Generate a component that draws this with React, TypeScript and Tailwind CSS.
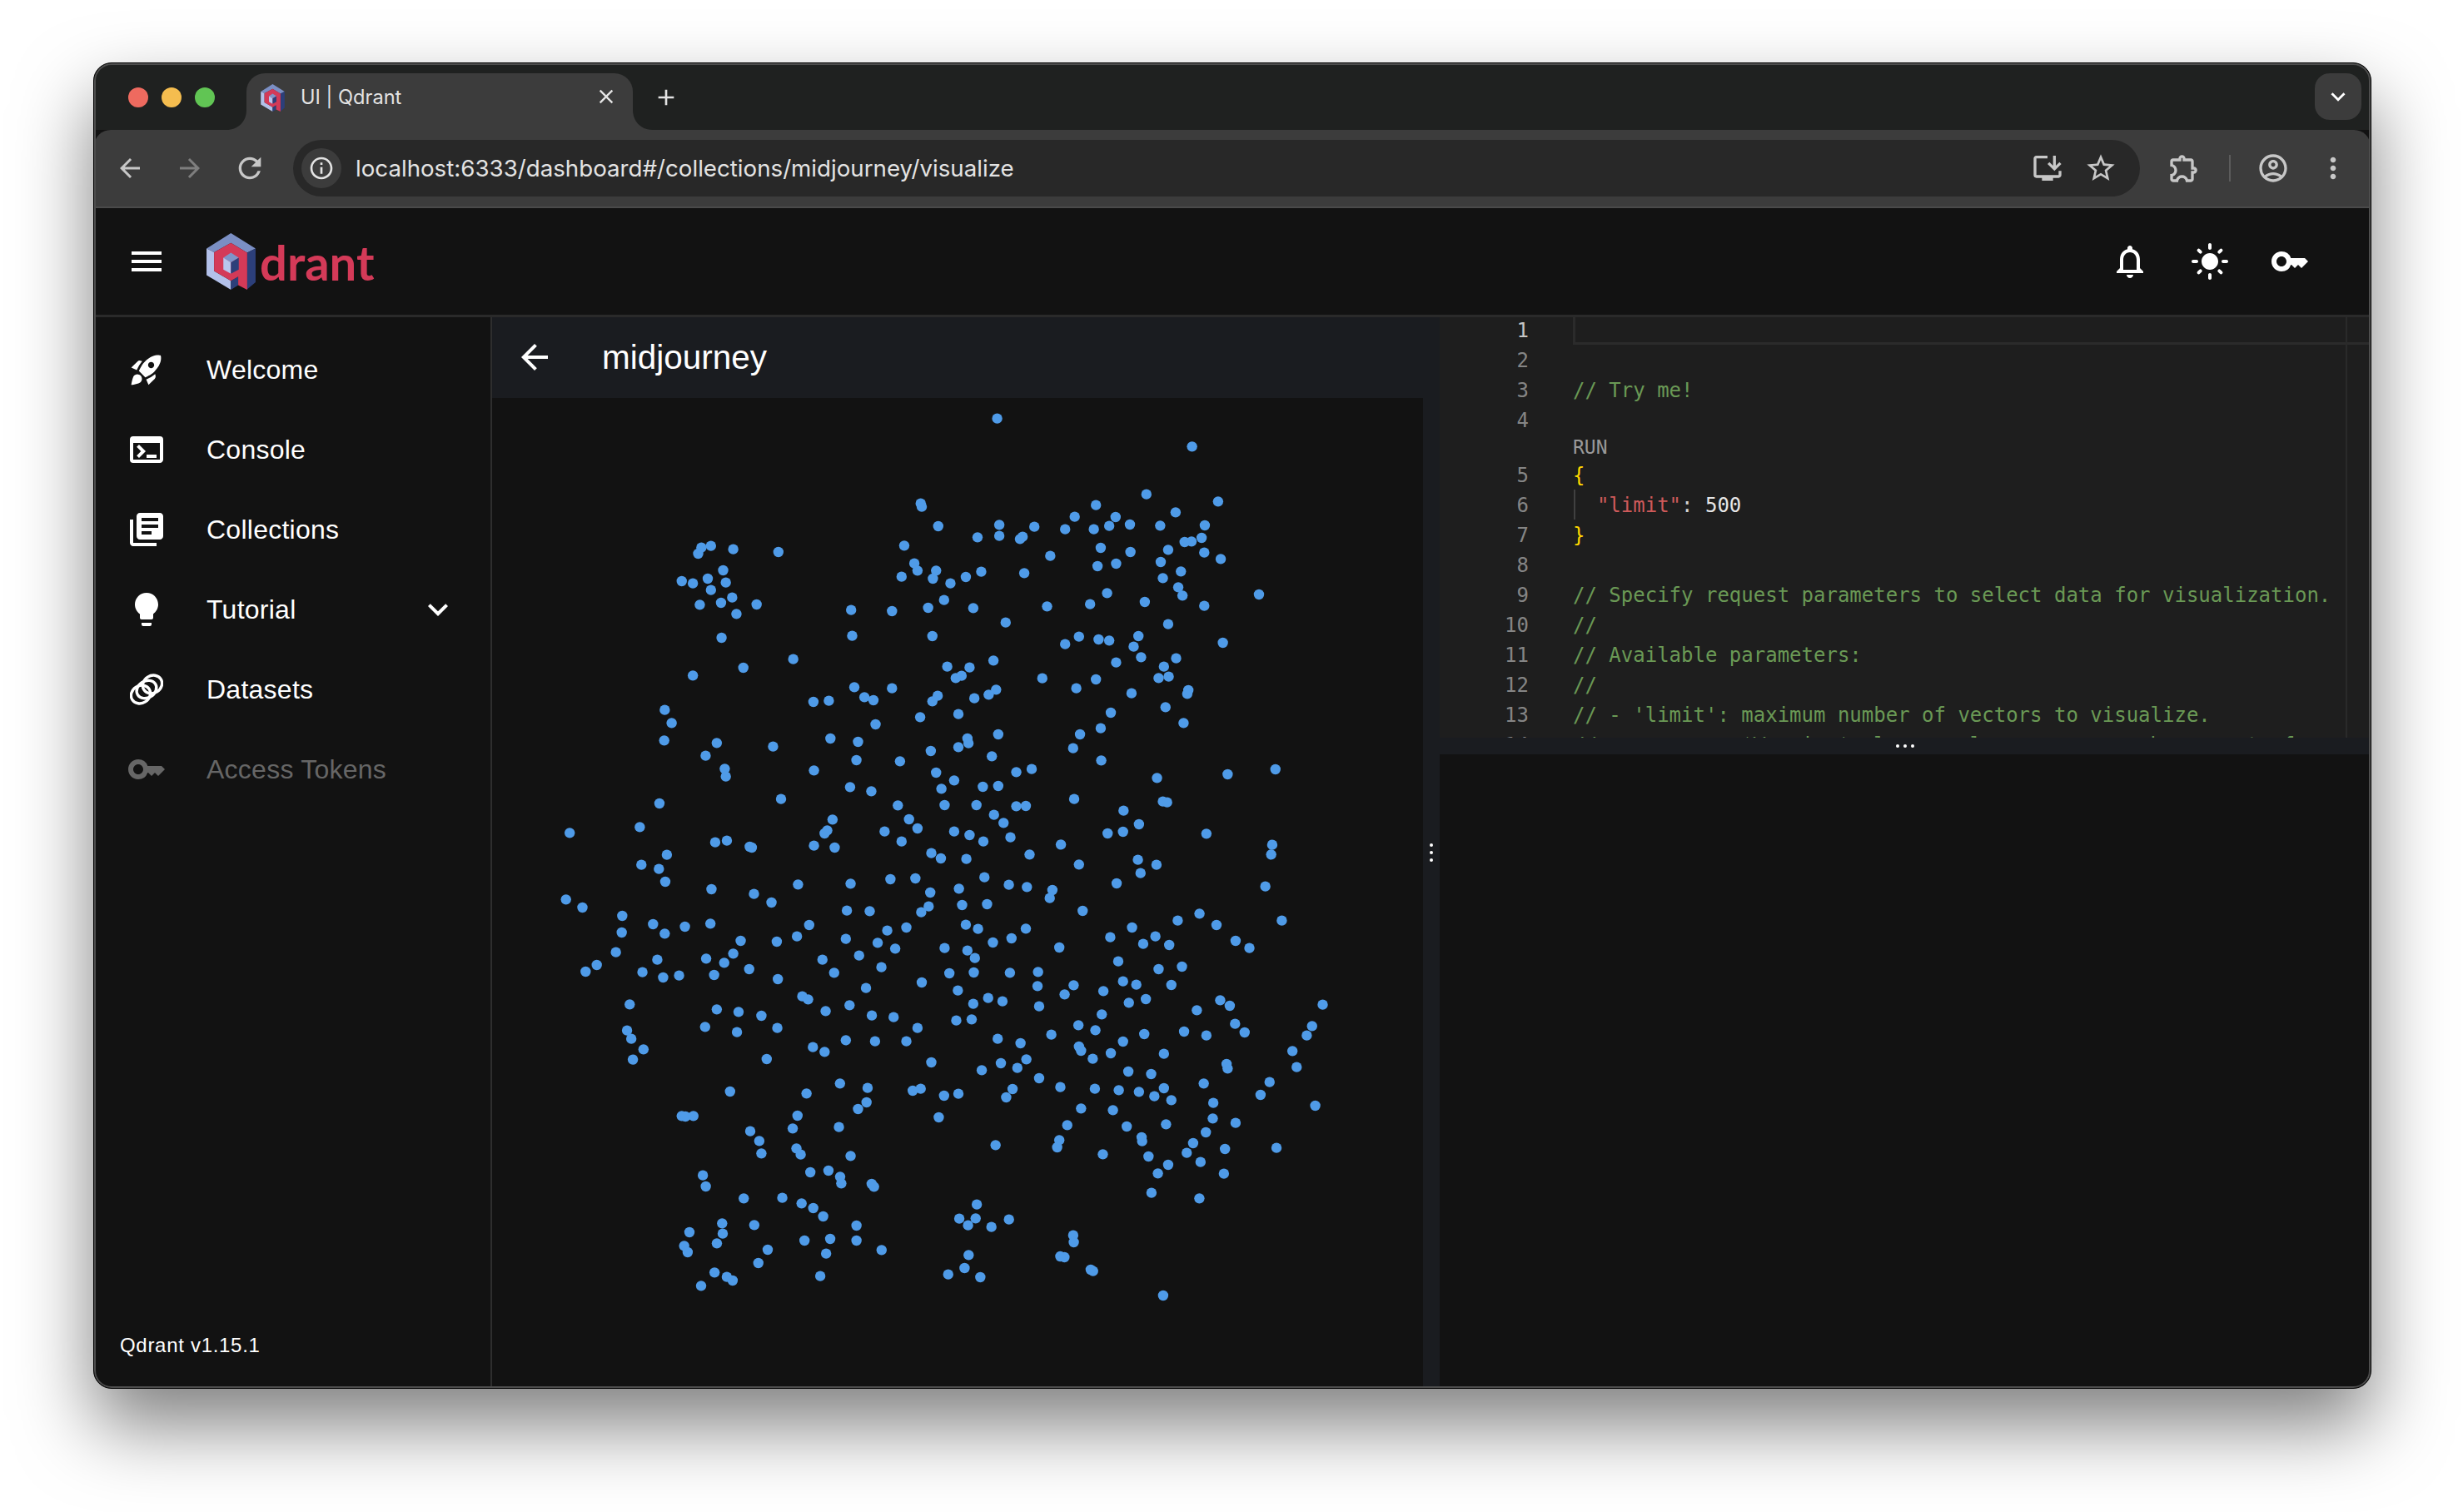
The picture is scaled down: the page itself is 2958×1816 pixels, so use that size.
import React from "react";
import {
  MdRocketLaunch, MdTerminal, MdLibraryBooks, MdLightbulb, MdKey, MdNotificationsNone, MdLightMode,
  MdKeyboardArrowDown, MdMenu, MdArrowBack, MdArrowForward, MdRefresh, MdInfoOutline, MdStarBorder,
  MdOutlineExtension, MdOutlineAccountCircle, MdMoreVert, MdClose, MdAdd, MdInstallDesktop,
} from "react-icons/md";

const z5 = [937,68,1304,169,1218,341,1353,367,793,374,795,386,1123,380,1273,406,1083,422,1160,423,826,456,941,451,1007,458,1065,467,1119,467,1148,455,1187,450,1244,454,1328,453,900,496,941,491,985,494,980,502,1322,498,1303,511,1290,513,380,533,398,527,374,555,440,539,525,549,762,526,1132,534,1188,549,1259,541,1327,551,1358,574,1037,563,781,590,787,616,822,616,421,615,1161,591,1126,600,1245,585,1283,619,907,620,988,625,757,638,816,645,878,639,849,662,1249,643,343,654,364,662,392,645,426,659,398,686,1278,676,1144,697,1286,706,1430,702,438,713,417,732,377,739,484,738,837,722,1215,729,1112,737,1327,743,1031,745,662,758,739,762,807,750,892,751,446,772,953,803,1259,809,418,858,664,851,815,852,1065,881,1091,854,1128,864,1148,868,1203,852,1194,890,1362,876,553,935,1208,928,1274,932,930,940,1161,947,459,966,843,962,885,965,1251,962,364,994,870,995,859,1003,1022,1004,1123,1008,1241,1003,1260,998,668,1036,739,1040,1086,1040,1297,1047,1295,1060,935,1045,921,1063,825,1067,815,1087,1190,1058,687,1072,704,1083,591,1089,620,1085,894,1076,1254,1108,311,1118,1151,1128,792,1144,864,1133,324,1165,708,1170,1288,1165,1132,1184,1093,1206,939,1206,623,1221,881,1221,883,1238,310,1228,409,1237,675,1233,515,1250,864,1252,812,1266,1080,1256,388,1283,672,1299,754,1303,927,1285,1133,1300,424,1330,426,1358,592,1336,822,1344,973,1342,1002,1331,1461,1332,1371,1350,1238,1363,856,1372];
const z6 = [660,16,700,31,832,22,910,15,939,12,301,75,530,59,1082,59,1249,68,1257,71,750,82,838,81,898,81,973,85,991,84,1175,101,931,116,627,133,771,132,949,145,1204,150,787,165,264,160,132,181,617,172,612,183,725,176,856,176,885,189,1145,183,1174,177,1331,184,962,197,406,215,428,209,757,212,911,212,471,231,475,234,592,227,631,234,1057,223,1455,224,1453,259,315,260,813,254,831,273,879,275,998,259,1202,278,267,296,300,311,1091,295,1237,296,1207,326,913,341,736,348,783,345,312,357,562,367,661,364,1162,363,959,368,993,376,1442,374,399,384,865,382,1041,387,811,396,479,401,1036,416,125,421,512,432,808,446,156,450,871,441,918,438,654,461,697,463,794,467,1098,462,231,480,1318,472,1277,497,1473,497,289,510,349,519,397,508,583,513,878,512,901,527,991,526,1350,513,1191,522,766,522,730,533,230,540,311,544,560,554,1150,557,1235,554,964,561,652,563,454,570,522,573,712,577,929,576,1212,581,1261,585,1386,570,1412,596,745,598,838,596,881,605,1054,594,219,611,440,616,297,638,389,634,423,649,608,638,677,623,895,632,1165,644,183,657,1241,672,1285,663,470,672,719,665,162,681,269,683,308,702,338,695,404,693,630,685,847,687,893,684,961,685,1014,682,524,708,795,720,1174,716,1199,728,1265,729,1013,733,1081,730,690,740,863,749,1137,751,1064,763,570,770,581,781,920,776,947,788,1217,780,1185,793,245,799,892,797,659,802,1357,784,1375,804,1550,800,409,817,1016,806,1313,820,614,823,450,826,493,840,701,839,742,845,1134,835,860,857,889,853,387,880,523,884,787,884,1090,874,1122,892,1385,869,1530,877,1403,900,240,893,447,899,1289,897,1214,906,1331,911,1039,908,1520,911,248,923,938,923,981,939,652,928,707,932,766,932,1174,933,590,953,612,970,1091,951,1095,966,271,961,1151,975,1251,977,1493,967,251,998,503,996,992,997,1117,995,813,1008,944,1011,975,1028,908,1036,1369,1014,1371,1030,1501,1025,1184,1041,1227,1050,1016,1065,641,1084,1326,1084,1450,1079,693,1100,1056,1097,1121,1103,1166,1108,1204,1114,1251,1101,966,1104,793,1103,778,1110,864,1121,837,1128,434,1113,578,1120,1233,1130,1265,1144,954,1134,1433,1125,691,1152,1344,1154,1536,1164,675,1176,1095,1174,1155,1180,343,1201,350,1203,365,1201,561,1200,827,1206,1343,1210,1386,1226,639,1241,552,1246,1069,1234,1181,1239,1255,1231,472,1256,489,1291,1330,1260,1209,1278,1210,1292,1054,1288,1306,1299,934,1306,1050,1314,559,1318,567,1340,493,1336,661,1345,1136,1339,1222,1347,1294,1334,1366,1320,1463,1316,1320,1367,1259,1377];
const z7 = [348,335,353,375,532,324,563,318,583,340,585,364,637,366,641,376,1127,328,1240,329,1116,398,1198,418,418,418,484,416,517,436,537,453,554,483,817,440,787,491,815,490,802,515,842,521,872,494,381,508,436,514,611,516,325,540,382,545,372,580,316,589,322,612,522,570,566,564,611,570,654,604,459,603,559,617,443,651,982,551,983,576,803,622,960,627,967,630,796,669,768,692,823,702,1012,675,1016,680,368,685,389,701,399,714,345,733,549,698,1136,768];

const dots: [number, number][] = [];
for (let i = 0; i < z5.length; i += 2) dots.push([600 + z5[i] / 1.568, 480 + z5[i + 1] / 3]);
for (let i = 0; i < z6.length; i += 2) dots.push([600 + z6[i] / 1.568, 940 + z6[i + 1] / 3]);
for (let i = 0; i < z7.length; i += 2) dots.push([600 + z7[i] / 1.4255, 1300 + z7[i + 1] / 3]);

function Logo({ className }: { className: string }) {
  return (
    <svg viewBox="55 30 175 202" className={className}>
      <polygon points="142,30 230,85 200,100 142,65 82,98 55,85" fill="#7b8fc4" />
      <polygon points="55,85 82,98 82,165 142,200 142,232 55,180" fill="#b3c1ea" />
      <polygon points="230,85 230,205 198,232 200,100" fill="#2c3f7a" />
      <polygon points="142,200 168,185 168,216 142,232" fill="#2c3f7a" />
      <polygon points="142,65 200,100 200,232 168,216 168,185 142,200 82,165 82,98" fill="#d43a58" />
      <polygon points="142,100 170,118 142,135 115,118" fill="#7e95c9" />
      <polygon points="115,118 142,135 142,175 115,160" fill="#b8c6ee" />
      <polygon points="142,135 170,118 170,160 142,175" fill="#2c3f7a" />
    </svg>
  );
}

function DatasetsIcon() {
  return (
    <svg viewBox="0 0 40 40" className="w-10 h-10" fill="none" stroke="#fff" strokeWidth="3.4">
      <ellipse cx="13" cy="26" rx="12" ry="10.5" transform="rotate(-32 13 26)" />
      <ellipse cx="20" cy="20" rx="12.5" ry="10" transform="rotate(-32 20 20)" />
      <ellipse cx="27" cy="14" rx="12" ry="10.5" transform="rotate(-32 27 14)" />
    </svg>
  );
}

function NavRow({ icon, label, dim, chevron }: { icon: React.ReactNode; label: string; dim?: boolean; chevron?: boolean }) {
  return (
    <div className={`flex items-center h-[96px] pl-[39px] ${dim ? "text-[#666666]" : "text-white"}`}>
      <div className="w-12 h-12 flex items-center justify-center shrink-0">{icon}</div>
      <span className="ml-12 text-[32px] leading-[48px] tracking-[0.25px]">{label}</span>
      {chevron && <MdKeyboardArrowDown className="ml-auto mr-[39px] text-white" size={48} />}
    </div>
  );
}

const Cm = ({ children }: { children: React.ReactNode }) => <span className="text-[#6a9955]">{children}</span>;

const lines: { n: number; c: React.ReactNode }[] = [
  { n: 1, c: "" },
  { n: 2, c: "" },
  { n: 3, c: <Cm>// Try me!</Cm> },
  { n: 4, c: "" },
  { n: 0, c: "RUN" },
  { n: 5, c: <span className="text-[#ffd700]">{"{"}</span> },
  { n: 6, c: <><span className="text-[#d4d4d4]">  </span><span className="text-[#ce5a5a]">"limit"</span><span className="text-[#d4d4d4]">: </span><span className="text-[#e6e6e6]">500</span></> },
  { n: 7, c: <span className="text-[#ffd700]">{"}"}</span> },
  { n: 8, c: "" },
  { n: 9, c: <Cm>// Specify request parameters to select data for visualization.</Cm> },
  { n: 10, c: <Cm>//</Cm> },
  { n: 11, c: <Cm>// Available parameters:</Cm> },
  { n: 12, c: <Cm>//</Cm> },
  { n: 13, c: <Cm>// - 'limit': maximum number of vectors to visualize.</Cm> },
  { n: 14, c: <Cm>//            *Warning*: large values may cause browser to freeze.</Cm> },
];

function Editor() {
  return (
    <div className="relative h-[505px] bg-[#1e1e1e] overflow-hidden font-['DejaVu_Sans_Mono',monospace] text-[24px] leading-[36px]">
      <div className="absolute left-[160px] right-0 top-0 h-[33px] border-[3px] border-t-0 border-r-0 border-[#2b2b2b]" />
      <div className="absolute left-[1088px] top-0 bottom-0 w-[2px] bg-[#2a2a2a]" />
      <div className="absolute left-[161px] top-[207px] h-[36px] w-[2px] bg-[#404040]" />
      <div className="-mt-[2px]">
        {lines.map((l, i) =>
          l.n === 0 ? (
            <div key={i} className="h-[30px] pl-[160px] text-[23px] leading-[28px] text-[#999999]">RUN</div>
          ) : (
            <div key={i} className="flex h-[36px]">
              <span className={`w-[107px] text-right ${l.n === 1 ? "text-[#c6c6c6]" : "text-[#858585]"}`}>{l.n}</span>
              <span className="ml-[53px] whitespace-pre">{l.c}</span>
            </div>
          )
        )}
      </div>
    </div>
  );
}

export default function App() {
  return (
    <div className="w-[2958px] h-[1816px] bg-white pl-[112px] pt-[75px] font-['Liberation_Sans',sans-serif] overflow-hidden">
      <div className="relative w-[2736px] h-[1593px] rounded-[22px] border border-black bg-[#121212] overflow-hidden flex flex-col shadow-[0_44px_90px_rgba(0,0,0,0.5)]">
        {/* title bar */}
        <div className="relative h-[80px] shrink-0 bg-[#1f2120] flex items-start pt-[12px] pl-[41px]">
          <div className="flex items-center gap-4 h-[58px]">
            <span className="w-6 h-6 rounded-full bg-[#ee6a5f]" />
            <span className="w-6 h-6 rounded-full bg-[#f5bd4f]" />
            <span className="w-6 h-6 rounded-full bg-[#61c554]" />
          </div>
          <div className="relative ml-[38px] w-[464px] h-[68px] bg-[#3c3c3c] rounded-t-[22px] flex items-start pt-[13px] pl-[17px] text-[#e3e3e3]">
            <svg viewBox="0 0 24 24" className="absolute -left-[24px] bottom-0 w-6 h-6"><path d="M24 0v24H0C14 24 24 14 24 0z" fill="#3c3c3c" /></svg>
            <svg viewBox="0 0 24 24" className="absolute -right-[24px] bottom-0 w-6 h-6"><path d="M0 0v24h24C10 24 0 14 0 0z" fill="#3c3c3c" /></svg>
            <Logo className="w-[29px] h-[33px]" />
            <span className="ml-[19px] font-['Inter',sans-serif] text-[23.6px] leading-[32px]">UI | Qdrant</span>
            <MdClose className="absolute right-[18px] top-[14px]" size={28} />
          </div>
          <MdAdd className="ml-[24px] mt-[13px] text-[#e3e3e3]" size={32} />
          <div className="absolute right-[11px] top-[12px] w-[56px] h-[56px] rounded-[18px] bg-[#3c3c3c] flex items-center justify-center text-white">
            <MdKeyboardArrowDown size={34} />
          </div>
        </div>
        {/* toolbar */}
        <div className="h-[94px] shrink-0 bg-[#3c3c3c] border-b-2 border-[#4a4a4a] rounded-t-[20px] flex items-start pt-[12px] pl-[19px] text-[#c7c7c7]">
          <div className="flex items-center gap-6 h-[68px]">
            <MdArrowBack size={36} className="mx-[6px]" />
            <MdArrowForward size={36} className="mx-[6px] text-[#7e7e7e]" />
            <MdRefresh size={40} className="mx-[4px]" />
          </div>
          <div className="ml-[28px] w-[2218px] h-[68px] rounded-full bg-[#282828] flex items-center pl-[10px] pr-[27px]">
            <div className="w-12 h-12 rounded-full bg-[#3c3c3c] flex items-center justify-center text-[#e3e3e3]">
              <MdInfoOutline size={32} />
            </div>
            <span className="ml-[17px] pt-[2px] font-['Inter',sans-serif] text-[27.7px] text-[#e3e3e3]">localhost:6333/dashboard#/collections/midjourney/visualize</span>
            <MdInstallDesktop size={40} className="ml-auto" />
            <MdStarBorder size={40} className="ml-[24px]" />
          </div>
          <div className="flex items-center h-[68px]">
            <MdOutlineExtension size={40} className="ml-[33px]" />
            <span className="ml-[34px] w-[2px] h-[32px] bg-[#5c5c5c]" />
            <MdOutlineAccountCircle size={40} className="ml-[31px]" />
            <MdMoreVert size={40} className="ml-[32px]" />
          </div>
        </div>
        {/* app header */}
        <div className="h-[131px] shrink-0 border-b-[3px] border-[#2a2a2a] flex items-center text-white pl-[39px]">
          <MdMenu size={48} />
          <div className="ml-[48px] flex items-center">
            <Logo className="w-[59px] h-[68px]" />
            <span className="ml-[5px] mt-[1px] font-['Lato',sans-serif] font-bold text-[58px] leading-[64px] text-[#d43a58]">drant</span>
          </div>
          <div className="ml-auto flex items-center mr-[73px] gap-12">
            <MdNotificationsNone size={48} />
            <MdLightMode size={48} />
            <MdKey size={48} />
          </div>
        </div>
        {/* body */}
        <div className="flex-1 flex min-h-0">
          <aside className="w-[478px] shrink-0 border-r-2 border-[#2e2e2e] flex flex-col pt-[15px]">
            <NavRow icon={<MdRocketLaunch size={44} />} label="Welcome" />
            <NavRow icon={<MdTerminal size={48} />} label="Console" />
            <NavRow icon={<MdLibraryBooks size={48} />} label="Collections" />
            <NavRow icon={<MdLightbulb size={48} />} label="Tutorial" chevron />
            <NavRow icon={<DatasetsIcon />} label="Datasets" />
            <NavRow icon={<MdKey size={48} />} label="Access Tokens" dim />
            <div className="mt-auto pl-[31px] pb-[35px] text-[24px] leading-[32px] tracking-[0.7px] text-white">Qdrant v1.15.1</div>
          </aside>
          <main className="flex-1 flex min-w-0">
            <section className="w-[1118px] shrink-0 flex flex-col">
              <div className="h-[97px] shrink-0 bg-[#1a1c20] flex items-center pl-[27px] text-white">
                <MdArrowBack size={48} className="-mt-[2px]" />
                <span className="ml-[57px] -mt-[2px] text-[40.5px] leading-[56px]">midjourney</span>
              </div>
              <div className="flex-1 min-h-0">
                <svg viewBox="591 478 1118 1188" className="block w-[1118px] h-[1188px]">
                  {dots.map(([x, y], i) => (
                    <circle key={i} cx={x} cy={y} r={6.2} fill="#4f9be8" />
                  ))}
                </svg>
              </div>
            </section>
            <div className="w-[20px] shrink-0 bg-[#1a1c20] flex flex-col items-center justify-center gap-[5px]">
              <span className="w-1 h-1 rounded-full bg-white" />
              <span className="w-1 h-1 rounded-full bg-white" />
              <span className="w-1 h-1 rounded-full bg-white" />
            </div>
            <section className="flex-1 min-w-0 flex flex-col">
              <Editor />
              <div className="h-[20px] shrink-0 bg-[#1a1c20] flex items-center justify-center gap-[5px]">
                <span className="w-1 h-1 rounded-full bg-white" />
                <span className="w-1 h-1 rounded-full bg-white" />
                <span className="w-1 h-1 rounded-full bg-white" />
              </div>
              <div className="flex-1 bg-[#121212]" />
            </section>
          </main>
        </div>
        <div className="absolute inset-0 rounded-[21px] border-2 border-[#4d4d4d] pointer-events-none" />
      </div>
    </div>
  );
}
